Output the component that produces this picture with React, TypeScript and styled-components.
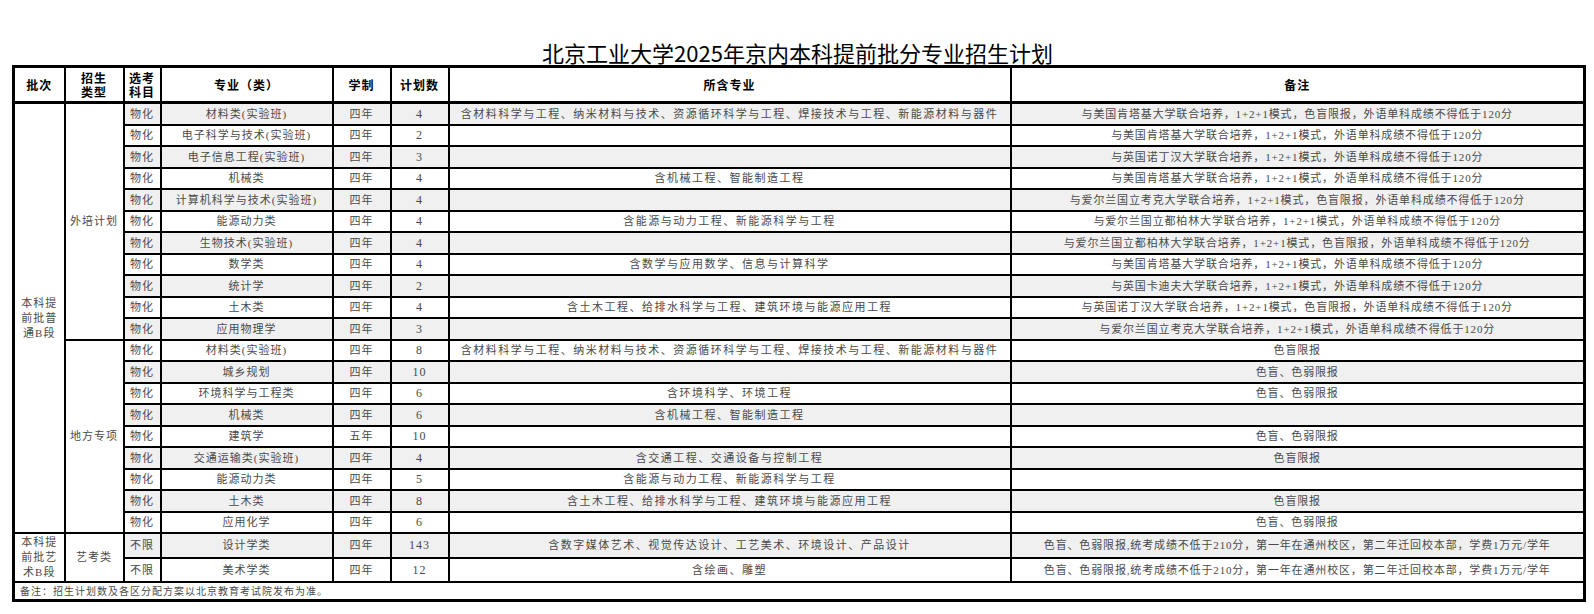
import React from "react";
import styled, { createGlobalStyle } from "styled-components";

type Row = {
    subject: string;
    major: string;
    years: string;
    count: string;
    includes: string;
    note: string;
};

const NOTE_KT = "与美国肯塔基大学联合培养，1+2+1模式，";
const LIMIT = "外语单科成绩不得低于120分";
const ART_NOTE = "色盲、色弱限报,统考成绩不低于210分，第一年在通州校区，第二年迁回校本部，学费1万元/学年";
const MAT = "含材料科学与工程、纳米材料与技术、资源循环科学与工程、焊接技术与工程、新能源材料与器件";
const MECH = "含机械工程、智能制造工程";
const ENERGY = "含能源与动力工程、新能源科学与工程";
const CIVIL = "含土木工程、给排水科学与工程、建筑环境与能源应用工程";

const abroad: Row[] = [
    { subject: "物化", major: "材料类(实验班)", years: "四年", count: "4", includes: MAT, note: NOTE_KT + "色盲限报，" + LIMIT },
    { subject: "物化", major: "电子科学与技术(实验班)", years: "四年", count: "2", includes: "", note: NOTE_KT + LIMIT },
    { subject: "物化", major: "电子信息工程(实验班)", years: "四年", count: "3", includes: "", note: "与英国诺丁汉大学联合培养，1+2+1模式，" + LIMIT },
    { subject: "物化", major: "机械类", years: "四年", count: "4", includes: MECH, note: NOTE_KT + LIMIT },
    { subject: "物化", major: "计算机科学与技术(实验班)", years: "四年", count: "4", includes: "", note: "与爱尔兰国立考克大学联合培养，1+2+1模式，色盲限报，" + LIMIT },
    { subject: "物化", major: "能源动力类", years: "四年", count: "4", includes: ENERGY, note: "与爱尔兰国立都柏林大学联合培养，1+2+1模式，" + LIMIT },
    { subject: "物化", major: "生物技术(实验班)", years: "四年", count: "4", includes: "", note: "与爱尔兰国立都柏林大学联合培养，1+2+1模式，色盲限报，" + LIMIT },
    { subject: "物化", major: "数学类", years: "四年", count: "4", includes: "含数学与应用数学、信息与计算科学", note: NOTE_KT + LIMIT },
    { subject: "物化", major: "统计学", years: "四年", count: "2", includes: "", note: "与英国卡迪夫大学联合培养，1+2+1模式，" + LIMIT },
    { subject: "物化", major: "土木类", years: "四年", count: "4", includes: CIVIL, note: "与英国诺丁汉大学联合培养，1+2+1模式，色盲限报，" + LIMIT },
    { subject: "物化", major: "应用物理学", years: "四年", count: "3", includes: "", note: "与爱尔兰国立考克大学联合培养，1+2+1模式，" + LIMIT },
];

const local: Row[] = [
    { subject: "物化", major: "材料类(实验班)", years: "四年", count: "8", includes: MAT, note: "色盲限报" },
    { subject: "物化", major: "城乡规划", years: "四年", count: "10", includes: "", note: "色盲、色弱限报" },
    { subject: "物化", major: "环境科学与工程类", years: "四年", count: "6", includes: "含环境科学、环境工程", note: "色盲、色弱限报" },
    { subject: "物化", major: "机械类", years: "四年", count: "6", includes: MECH, note: "" },
    { subject: "物化", major: "建筑学", years: "五年", count: "10", includes: "", note: "色盲、色弱限报" },
    { subject: "物化", major: "交通运输类(实验班)", years: "四年", count: "4", includes: "含交通工程、交通设备与控制工程", note: "色盲限报" },
    { subject: "物化", major: "能源动力类", years: "四年", count: "5", includes: ENERGY, note: "" },
    { subject: "物化", major: "土木类", years: "四年", count: "8", includes: CIVIL, note: "色盲限报" },
    { subject: "物化", major: "应用化学", years: "四年", count: "6", includes: "", note: "色盲、色弱限报" },
];

const art: Row[] = [
    { subject: "不限", major: "设计学类", years: "四年", count: "143", includes: "含数字媒体艺术、视觉传达设计、工艺美术、环境设计、产品设计", note: ART_NOTE },
    { subject: "不限", major: "美术学类", years: "四年", count: "12", includes: "含绘画、雕塑", note: ART_NOTE },
];

const widths = [51, 59, 37, 172, 58, 58, 562, 574];

const DataCells: React.FC<{ row: Row; alt: boolean }> = ({ row, alt }) => (
    <>
        <Cell $alt={alt}>{row.subject}</Cell>
        <Cell $alt={alt}>{row.major}</Cell>
        <Cell $alt={alt}>{row.years}</Cell>
        <Cell $alt={alt} $size={12}>{row.count}</Cell>
        <Cell $alt={alt} $track={1.5}>{row.includes}</Cell>
        <Cell $alt={alt} $track={0.85}>{row.note}</Cell>
    </>
);

const App: React.FC = () => {
    const regular = [...abroad, ...local];

    return (
        <Page>
            <GlobalStyle />
            <Title>北京工业大学2025年京内本科提前批分专业招生计划</Title>
            <Table>
                <colgroup>
                    {widths.map((w, i) => (
                        <col key={i} style={{ width: w }} />
                    ))}
                </colgroup>
                <thead>
                    <tr>
                        <HeadCell>批次</HeadCell>
                        <HeadCell>招生<br />类型</HeadCell>
                        <HeadCell>选考<br />科目</HeadCell>
                        <HeadCell>专业（类）</HeadCell>
                        <HeadCell>学制</HeadCell>
                        <HeadCell>计划数</HeadCell>
                        <HeadCell>所含专业</HeadCell>
                        <HeadCell>备注</HeadCell>
                    </tr>
                </thead>
                <tbody>
                    {regular.map((row, i) => (
                        <tr key={`r${i}`}>
                            {i === 0 && (
                                <GroupCell rowSpan={regular.length}>本科提<br />前批普<br />通B段</GroupCell>
                            )}
                            {i === 0 && <GroupCell rowSpan={abroad.length}>外培计划</GroupCell>}
                            {i === abroad.length && <GroupCell rowSpan={local.length}>地方专项</GroupCell>}
                            <DataCells row={row} alt={i % 2 === 0} />
                        </tr>
                    ))}
                    {art.map((row, i) => (
                        <ArtRow key={`a${i}`} $first={i === 0}>
                            {i === 0 && (
                                <GroupCell rowSpan={art.length}>本科提<br />前批艺<br />术B段</GroupCell>
                            )}
                            {i === 0 && <GroupCell rowSpan={art.length}>艺考类</GroupCell>}
                            <DataCells row={row} alt={i % 2 === 0} />
                        </ArtRow>
                    ))}
                    <tr>
                        <FootCell colSpan={8}>备注：招生计划数及各区分配方案以北京教育考试院发布为准。</FootCell>
                    </tr>
                </tbody>
            </Table>
        </Page>
    );
};

const GlobalStyle = createGlobalStyle`
    body {
        margin: 0;
        background: #ffffff;
        font-family: "Liberation Serif", "Noto Sans CJK SC", serif;
    }
`;

const Page = styled.div`
    width: 1571px;
    padding: 40px 0 0 12px;
`;

const Title = styled.h1`
    margin: 0;
    height: 25px;
    line-height: 25px;
    font-family: "Noto Sans CJK SC", sans-serif;
    font-weight: 400;
    font-size: 22px;
    text-align: center;
    color: #000000;
`;

const Table = styled.table`
    width: 1571px;
    table-layout: fixed;
    border-collapse: collapse;
    border: 3px solid #000000;
`;

const HeadCell = styled.th`
    height: 33px;
    padding: 0;
    border: 2px solid #000000;
    border-bottom-width: 3px;
    font-family: "Noto Sans CJK SC", sans-serif;
    font-weight: 700;
    font-size: 12px;
    line-height: 14px;
    letter-spacing: 1px;
    color: #000000;
`;

const Cell = styled.td<{ $alt?: boolean; $track?: number; $size?: number }>`
    height: 19.5px;
    padding: 0 2px;
    border: 2px solid #000000;
    background: ${(p) => (p.$alt ? "#f0f0f0" : "#ffffff")};
    color: #4a4a4a;
    font-size: ${(p) => p.$size ?? 11}px;
    line-height: 14px;
    letter-spacing: ${(p) => p.$track ?? 1}px;
    text-align: center;
    white-space: nowrap;
    overflow: hidden;
`;

const GroupCell = styled.td`
    padding: 0;
    border: 2px solid #000000;
    background: #ffffff;
    color: #4a4a4a;
    font-size: 11px;
    line-height: 15px;
    letter-spacing: 1px;
    text-align: center;
`;

const ArtRow = styled.tr<{ $first?: boolean }>`
    & > td {
        height: ${(p) => (p.$first ? "22.5px" : "22px")};
    }
`;

const FootCell = styled.td`
    height: 16px;
    padding: 0 0 0 5px;
    border: 2px solid #000000;
    color: #4a4a4a;
    font-size: 10px;
    letter-spacing: 1px;
    text-align: left;
`;

export default App;
